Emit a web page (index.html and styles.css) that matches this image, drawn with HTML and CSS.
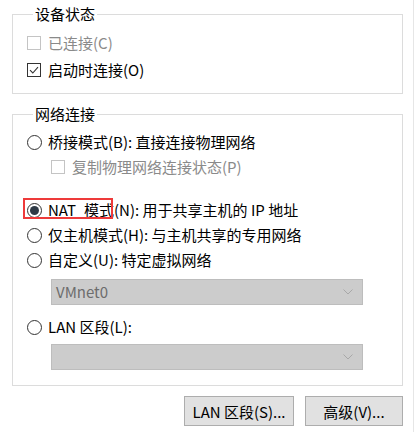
FILE: index.html
```html
<!DOCTYPE html>
<html lang="zh-CN">
<head>
<meta charset="utf-8">
<link rel="stylesheet" href="styles.css">
</head>
<body>
<div class="window">
  <fieldset class="group g1">
    <legend>设备状态</legend>
    <div class="row disabled"><span class="cb"></span><span class="label">已连接(C)</span></div>
    <div class="row r2"><span class="cb on"><svg viewBox="0 0 14 14" width="14" height="14"><path d="M3 7.2 L5.8 10 L11 4.2" fill="none" stroke="#333" stroke-width="1.1"/></svg></span><span class="label">启动时连接(O)</span></div>
  </fieldset>

  <fieldset class="group g2">
    <legend>网络连接</legend>
    <div class="row rb"><span class="rd"></span><span class="label">桥接模式(B): 直接连接物理网络</span></div>
    <div class="row sub disabled"><span class="cb"></span><span class="label">复制物理网络连接状态(P)</span></div>
    <div class="row nat"><span class="rd on"></span><span class="label">NAT<span class="sp"> </span>模式(N): 用于共享主机的 IP 地址</span><span class="mark"></span></div>
    <div class="row r-next"><span class="rd"></span><span class="label">仅主机模式(H): 与主机共享的专用网络</span></div>
    <div class="row r-next"><span class="rd"></span><span class="label">自定义(U): 特定虚拟网络</span></div>
    <div class="select s1"><span class="val">VMnet0</span><svg class="chev" viewBox="0 0 10 6" width="10" height="6"><path d="M0.5 0.5 L5 5 L9.5 0.5" fill="none" stroke="#a8a8a8" stroke-width="1"/></svg></div>
    <div class="row lan"><span class="rd"></span><span class="label">LAN 区段(L):</span></div>
    <div class="select s2"><span class="val"></span><svg class="chev" viewBox="0 0 10 6" width="10" height="6"><path d="M0.5 0.5 L5 5 L9.5 0.5" fill="none" stroke="#a8a8a8" stroke-width="1"/></svg></div>
  </fieldset>

  <div class="buttons">
    <button class="btn b-lan">LAN 区段(S)...</button>
    <button class="btn b-adv">高级(V)...</button>
  </div>
</div>
</body>
</html>
```

FILE: styles.css
```css
html, body {
  margin: 0;
  padding: 0;
  background: #ffffff;
}
body {
  font-family: "Microsoft YaHei", "Noto Sans CJK SC", sans-serif;
  font-size: 15px;
  line-height: 20px;
  color: #000;
}
.window {
  width: 414px;
  height: 432px;
  box-sizing: border-box;
  border-right: 1px solid #e6e6e6;
  padding-top: 4px;
  display: flex;
  flex-direction: column;
}
.group {
  margin: 0 0 0 12px;
  width: 391px;
  box-sizing: border-box;
  border: 1px solid #dcdcdc;
  padding: 0 0 0 14px;
  min-width: 0;
}
.group legend {
  margin-left: 6px;
  padding: 0 2px;
  line-height: 20px;
}
.g1 {
  padding-top: 9px;
  padding-bottom: 13px;
}
.g2 {
  margin-top: 10px;
  padding-top: 8px;
  padding-bottom: 15px;
}
.row {
  display: flex;
  align-items: center;
  height: 20px;
  position: relative;
}
.r2 { margin-top: 7px; }
.sub { margin-top: 5px; margin-left: 24px; }
.sub .label { margin-left: 7px; }
.nat { margin-top: 23px; }
.r-next { margin-top: 5px; }
.lan { margin-top: 12px; }
.label { margin-left: 7px; white-space: nowrap; }
.rd + .label { margin-left: 6px; }
.disabled .label { color: #8a8a8a; }
.sp { display: inline-block; width: 8px; }

.cb {
  width: 14px;
  height: 14px;
  box-sizing: border-box;
  border: 1px solid #333333;
  background: #fff;
  flex: none;
  display: flex;
}
.cb svg { margin: -1px; }
.disabled .cb { border-color: #c4c4c4; }

.rd {
  width: 15px;
  height: 15px;
  box-sizing: border-box;
  border: 1px solid #333333;
  border-radius: 50%;
  background: #fff;
  flex: none;
  display: flex;
  align-items: center;
  justify-content: center;
}
.rd.on::after {
  content: "";
  width: 9px;
  height: 9px;
  border-radius: 50%;
  background: #2e3a46;
}

.mark {
  position: absolute;
  left: -4px;
  top: -2px;
  width: 90px;
  height: 21px;
  box-sizing: border-box;
  border: 2px solid #ee3a3a;
}

.select {
  margin-left: 24px;
  width: 312px;
  height: 26px;
  box-sizing: border-box;
  background: #cccccc;
  border: 1px solid #bdbdbd;
  display: flex;
  align-items: center;
  justify-content: space-between;
  padding: 0 9px 0 4px;
  color: #6d6d6d;
}
.s1 { margin-top: 9px; }
.s2 { margin-top: 7px; }
.chev { flex: none; }

.buttons {
  display: flex;
  justify-content: flex-end;
  gap: 11px;
  width: 403px;
  margin-top: 10px;
}
.btn {
  font-family: "Microsoft YaHei", "Noto Sans CJK SC", sans-serif;
  font-size: 15px;
  color: #000;
  height: 30px;
  background: #e1e1e1;
  border: 1px solid #adadad;
  padding: 0;
  margin: 0;
}
.b-lan { width: 110px; }
.b-adv { width: 98px; }
```
